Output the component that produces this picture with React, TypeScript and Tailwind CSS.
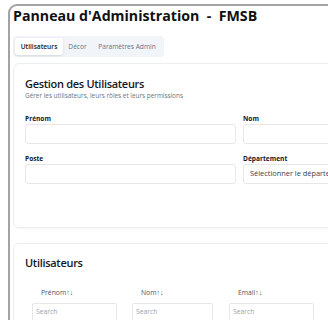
import React from 'react'

const font = { fontFamily: '"Open Sans", "Noto Sans", sans-serif' }

const Field = ({ label, placeholder }: { label: string; placeholder?: string }) => (
  <div className="flex flex-col gap-[1px]">
    <label className="text-[6.6px] font-bold text-[#111827] leading-[8px]">{label}</label>
    <div className="h-[20px] rounded-[3px] border border-[#e5e7eb] bg-white px-[6px] flex items-center text-[7.4px] text-[#374151] whitespace-nowrap overflow-hidden">
      {placeholder}
    </div>
  </div>
)

const columns = [
  { name: 'Prénom', cell: 'w-[100px]', input: 'w-[85px]' },
  { name: 'Nom', cell: 'w-[97px]', input: 'w-[81px]' },
  { name: 'Email', cell: 'w-[100px]', input: 'w-[85px]' },
]

export default function App() {
  return (
    <div className="w-[328px] h-[320px] overflow-hidden bg-white" style={font}>
      <div className="ml-[8px] mt-[4px] w-[470px] h-[400px] rounded-[9px] border-2 border-[#a3a3a3] bg-white pl-[3px] pt-[1px]">
        <h1 className="text-[14.2px] font-bold text-[#111] leading-[18px] whitespace-pre">Panneau d'Administration  -  FMSB</h1>

        <div className="mt-[11px] inline-flex items-center rounded-[4px] bg-[#f1f5f9] p-[2px]">
          <div className="w-[48px] h-[17px] flex items-center justify-center rounded-[3px] bg-white shadow-sm text-[6.6px] font-semibold text-[#111827]">Utilisateurs</div>
          <div className="w-[29px] h-[17px] flex items-center justify-center text-[6.6px] text-[#64748b]">Décor</div>
          <div className="w-[70px] h-[17px] flex items-center justify-center text-[6.6px] text-[#64748b]">Paramètres Admin</div>
        </div>

        <section className="mt-[6px] w-[453px] h-[165px] rounded-[6px] border border-[#eceef1] shadow-[0_1px_2px_rgba(0,0,0,0.04)] px-[11px] pt-[13px]">
          <h2 className="text-[11px] font-semibold tracking-[-0.3px] text-[#111827] leading-[14px]">Gestion des Utilisateurs</h2>
          <p className="text-[6.4px] text-[#6b7280] leading-[9px]">Gérer les utilisateurs, leurs rôles et leurs permissions</p>
          <div className="mt-[15px] grid grid-cols-2 gap-x-[7px] gap-y-[11px]">
            <Field label="Prénom" />
            <Field label="Nom" />
            <Field label="Poste" />
            <Field label="Département" placeholder="Sélectionner le département" />
          </div>
        </section>

        <section className="mt-[15px] w-[453px] h-[120px] rounded-[6px] border border-[#eceef1] shadow-[0_1px_2px_rgba(0,0,0,0.04)] px-[11px] pt-[12px]">
          <h2 className="text-[11px] font-semibold tracking-[-0.3px] text-[#111827] leading-[14px]">Utilisateurs</h2>
          <table className="mt-[18px] ml-[7px] border-separate border-spacing-0">
            <thead>
              <tr>
                {columns.map((c) => (
                  <th key={c.name} className={`${c.cell} p-0 text-left font-normal align-top`}>
                    <div className="pl-[9px] text-[6.8px] text-[#4b5563] leading-[9px]">
                      {c.name}
                      <span>↑↓</span>
                    </div>
                    <div className={`${c.input} mt-[6px] h-[19px] rounded-[2px] border border-[#e5e7eb] px-[3px] flex items-center text-[6.8px] text-[#9ca3af]`}>
                      Search
                    </div>
                  </th>
                ))}
              </tr>
            </thead>
          </table>
        </section>
      </div>
    </div>
  )
}
